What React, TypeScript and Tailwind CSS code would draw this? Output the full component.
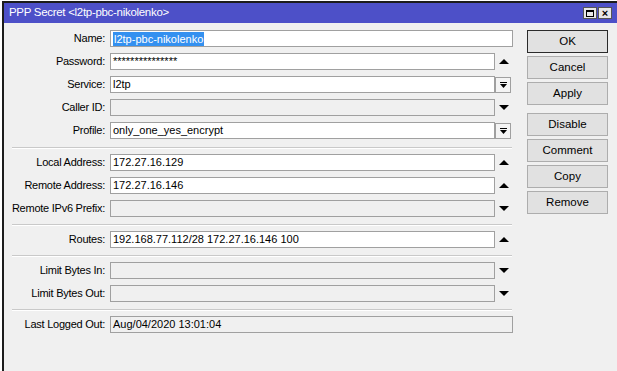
import React from 'react';

const font = { fontFamily: '"Liberation Sans", Arial, sans-serif' };

function Triangle({ down }: { down?: boolean }) {
  return (
    <svg width="10" height="5" viewBox="0 0 10 5">
      <path d={down ? 'M0 0H10L5 5Z' : 'M0 5H10L5 0Z'} fill="#000" />
    </svg>
  );
}

function DropButton() {
  return (
    <div className="w-[16px] h-[16px] border border-[#a0a0a0] bg-[#f4f4f4] flex flex-col items-center justify-center gap-[1px]">
      <div className="w-[7px] h-[1px] bg-black" />
      <svg width="7" height="4" viewBox="0 0 7 4">
        <path d="M0 0H7L3.5 4Z" fill="#000" />
      </svg>
    </div>
  );
}

type RowProps = {
  label: string;
  value?: string;
  disabled?: boolean;
  suffix?: 'up' | 'down' | 'drop';
  selected?: boolean;
};

function Row({ label, value, disabled, suffix, selected }: RowProps) {
  return (
    <div className="flex items-center h-[17px]">
      <div className="w-[102px] pr-[1px] text-right text-[11px] tracking-[-0.25px] text-black whitespace-nowrap">
        {label}
      </div>
      <div className="ml-[4px] flex flex-1 items-center">
        <div
          className={`flex-1 h-[17px] border border-[#a0a0a0] flex items-center pl-[2px] text-[11px] text-black whitespace-nowrap ${
            disabled ? 'bg-[#f0f0f0]' : 'bg-white'
          }`}
        >
          {selected ? (
            <span className="bg-[#3390f0] text-white px-[1px] leading-[14px]">{value}</span>
          ) : (
            value
          )}
        </div>
        {suffix && (
          <div className="w-[18px] flex items-center justify-center">
            {suffix === 'drop' ? (
              <div className="w-full flex justify-start">
                <DropButton />
              </div>
            ) : (
              <Triangle down={suffix === 'down'} />
            )}
          </div>
        )}
      </div>
    </div>
  );
}

function Separator() {
  return <div className="ml-[8px] w-[500px] border-t border-[#c9c9c9] border-b border-b-white" />;
}

function Btn({ children, primary }: { children: React.ReactNode; primary?: boolean }) {
  return (
    <div
      className={`w-[81px] h-[23px] flex items-center justify-center text-[11.5px] text-black bg-[#e1e1e1] border ${
        primary ? 'border-[#2b2b2b]' : 'border-[#adadad]'
      }`}
    >
      {children}
    </div>
  );
}

export default function App() {
  return (
    <div className="w-[617px] h-[371px] bg-white pt-[1px] pl-[2px] overflow-hidden" style={font}>
      <div className="h-[370px] border-l-2 border-t-2 border-[#1c1c1c] bg-[#f0f0f0] flex flex-col">
        <div className="h-[20px] bg-[#4d50c8] flex items-center justify-between pl-[5px] pr-[5px]">
          <span className="text-white text-[11.5px] tracking-[-0.3px]">PPP Secret &lt;l2tp-pbc-nikolenko&gt;</span>
          <div className="flex gap-[1px]">
            <div className="w-[14px] h-[12px] bg-[#e8e8e8] border border-[#555] flex items-center justify-center">
              <div className="w-[8px] h-[7px] border border-black border-t-2" />
            </div>
            <div className="w-[14px] h-[12px] bg-[#e8e8e8] border border-[#555] flex items-center justify-center text-[11px] font-bold leading-none">
              ×
            </div>
          </div>
        </div>

        <div className="flex pt-[7px]">
          <div className="w-[509px] flex flex-col">
            <div className="flex flex-col gap-[6px]">
              <Row label="Name:" value="l2tp-pbc-nikolenko" selected />
              <Row label="Password:" value="***************" suffix="up" />
              <Row label="Service:" value="l2tp" suffix="drop" />
              <Row label="Caller ID:" disabled suffix="down" />
              <Row label="Profile:" value="only_one_yes_encrypt" suffix="drop" />
            </div>
            <div className="mt-[8px] mb-[5px]">
              <Separator />
            </div>
            <div className="flex flex-col gap-[6px]">
              <Row label="Local Address:" value="172.27.16.129" suffix="up" />
              <Row label="Remote Address:" value="172.27.16.146" suffix="up" />
              <Row label="Remote IPv6 Prefix:" disabled suffix="down" />
            </div>
            <div className="mt-[7px] mb-[5px]">
              <Separator />
            </div>
            <Row label="Routes:" value="192.168.77.112/28 172.27.16.146 100" suffix="up" />
            <div className="mt-[7px] mb-[5px]">
              <Separator />
            </div>
            <div className="flex flex-col gap-[6px]">
              <Row label="Limit Bytes In:" disabled suffix="down" />
              <Row label="Limit Bytes Out:" disabled suffix="down" />
            </div>
            <div className="mt-[7px] mb-[5px]">
              <Separator />
            </div>
            <Row label="Last Logged Out:" value="Aug/04/2020 13:01:04" disabled />
          </div>

          <div className="ml-[14px] flex flex-col">
            <div className="flex flex-col gap-[3px]">
              <Btn primary>OK</Btn>
              <Btn>Cancel</Btn>
              <Btn>Apply</Btn>
            </div>
            <div className="mt-[8px] flex flex-col gap-[3px]">
              <Btn>Disable</Btn>
              <Btn>Comment</Btn>
              <Btn>Copy</Btn>
              <Btn>Remove</Btn>
            </div>
          </div>
        </div>
      </div>
    </div>
  );
}
